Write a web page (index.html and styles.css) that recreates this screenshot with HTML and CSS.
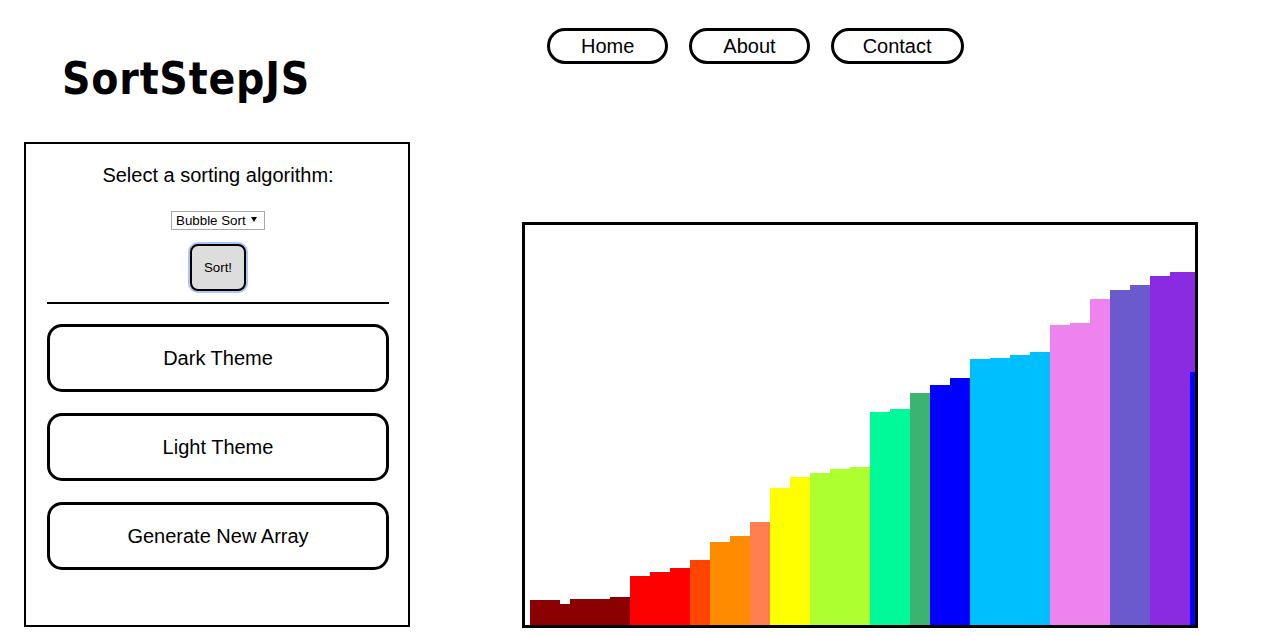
FILE: index.html
```html
<!DOCTYPE html>
<html lang="en">
<head>
<meta charset="utf-8">
<title>SortStepJS</title>
<link rel="stylesheet" href="styles.css">
</head>
<body>
<header class="header">
  <h1 class="logo">SortStepJS</h1>
  <nav class="nav">
    <a class="nav-link" href="#">Home</a>
    <a class="nav-link" href="#">About</a>
    <a class="nav-link nav-link-contact" href="#">Contact</a>
  </nav>
</header>
<main class="main">
  <aside class="panel">
    <p class="panel-label">Select a sorting algorithm:</p>
    <span class="select-wrap">
      <select class="select">
        <option>Bubble Sort</option>
        <option>Selection Sort</option>
        <option>Insertion Sort</option>
      </select>
      <span class="select-arrow"></span>
    </span>
    <button class="sort-btn">Sort!</button>
    <div class="divider"></div>
    <button class="big-btn">Dark Theme</button>
    <button class="big-btn">Light Theme</button>
    <button class="big-btn">Generate New Array</button>
  </aside>
  <section class="chart">
    <svg class="chart-svg" width="670" height="400" viewBox="0 0 670 400">
      <rect x="5" y="375" width="30" height="25" fill="#8B0000"/>
      <rect x="35" y="379" width="10" height="21" fill="#8B0000"/>
      <rect x="45" y="374" width="40" height="26" fill="#8B0000"/>
      <rect x="85" y="372" width="20" height="28" fill="#8B0000"/>
      <rect x="105" y="351" width="20" height="49" fill="#FF0000"/>
      <rect x="125" y="347" width="20" height="53" fill="#FF0000"/>
      <rect x="145" y="343" width="20" height="57" fill="#FF0000"/>
      <rect x="165" y="335" width="20" height="65" fill="#FF4500"/>
      <rect x="185" y="317" width="20" height="83" fill="#FF8C00"/>
      <rect x="205" y="311" width="20" height="89" fill="#FF8C00"/>
      <rect x="225" y="297" width="20" height="103" fill="#FF7F50"/>
      <rect x="245" y="263" width="20" height="137" fill="#FFFF00"/>
      <rect x="265" y="252" width="20" height="148" fill="#FFFF00"/>
      <rect x="285" y="248" width="20" height="152" fill="#ADFF2F"/>
      <rect x="305" y="244" width="20" height="156" fill="#ADFF2F"/>
      <rect x="325" y="242" width="20" height="158" fill="#ADFF2F"/>
      <rect x="345" y="187" width="20" height="213" fill="#00FA9A"/>
      <rect x="365" y="184" width="20" height="216" fill="#00FA9A"/>
      <rect x="385" y="168" width="20" height="232" fill="#3CB371"/>
      <rect x="405" y="160" width="20" height="240" fill="#0000FF"/>
      <rect x="425" y="153" width="20" height="247" fill="#0000FF"/>
      <rect x="445" y="134" width="20" height="266" fill="#00BFFF"/>
      <rect x="465" y="133" width="20" height="267" fill="#00BFFF"/>
      <rect x="485" y="130" width="20" height="270" fill="#00BFFF"/>
      <rect x="505" y="127" width="20" height="273" fill="#00BFFF"/>
      <rect x="525" y="100" width="20" height="300" fill="#EE82EE"/>
      <rect x="545" y="98" width="20" height="302" fill="#EE82EE"/>
      <rect x="565" y="74" width="20" height="326" fill="#EE82EE"/>
      <rect x="585" y="65" width="20" height="335" fill="#6A5ACD"/>
      <rect x="605" y="60" width="20" height="340" fill="#6A5ACD"/>
      <rect x="625" y="51" width="20" height="349" fill="#8A2BE2"/>
      <rect x="645" y="47" width="25" height="353" fill="#8A2BE2"/>
      <rect x="665" y="147" width="5" height="253" fill="#0000FF"/>
    </svg>
  </section>
</main>
</body>
</html>
```
FILE: styles.css
```css
* { box-sizing: border-box; }

html, body {
  margin: 0;
  padding: 0;
  background: #fff;
}

body {
  font-family: "Liberation Sans", Arial, sans-serif;
  color: #000;
  width: 1272px;
  height: 636px;
  overflow: hidden;
}

.header {
  display: grid;
  grid-template-columns: 547px auto;
  align-items: start;
}

.logo {
  margin: 55px 0 0 62px;
  font-family: "DejaVu Sans Condensed", "DejaVu Sans", sans-serif;
  font-stretch: condensed;
  font-weight: 700;
  font-size: 44px;
  letter-spacing: 0.8px;
  line-height: 48px;
  height: 48px;
}

.nav {
  display: flex;
  gap: 21px;
  margin-top: 28px;
}

.nav-link {
  display: block;
  height: 36px;
  padding: 0 31px;
  border: 3px solid #000;
  border-radius: 18px;
  font-size: 20px;
  line-height: 30px;
  color: #000;
  text-decoration: none;
}

.nav-link-contact {
  padding: 0 29px;
}

.main {
  display: flex;
  align-items: flex-start;
  margin-top: 39px;
}

.panel {
  margin-left: 24px;
  width: 386px;
  height: 485px;
  border: 2px solid #000;
  padding: 0 19px 0 21px;
  display: flex;
  flex-direction: column;
  align-items: center;
}

.panel-label {
  margin: 20px 0 0;
  font-size: 20px;
  line-height: 23px;
}

.select-wrap {
  position: relative;
  display: block;
  margin-top: 24px;
  width: 94px;
  height: 19px;
}

.select {
  appearance: none;
  -webkit-appearance: none;
  display: block;
  width: 94px;
  height: 19px;
  margin: 0;
  padding: 0 0 0 4px;
  border: 1px solid #a9a9a9;
  border-radius: 0;
  background: #fff;
  font-family: "Liberation Sans", Arial, sans-serif;
  font-size: 13.33px;
  line-height: 17px;
  color: #000;
}

.select-arrow {
  position: absolute;
  right: 8px;
  top: 6px;
  width: 0;
  height: 0;
  border-left: 3px solid transparent;
  border-right: 3px solid transparent;
  border-top: 5px solid #000;
  pointer-events: none;
}

.sort-btn {
  margin-top: 14px;
  width: 56px;
  height: 47px;
  border: 2px solid #000;
  border-radius: 8px;
  background: #dddddd;
  box-shadow: 0 0 0 2px #a9c6f6;
  font-family: "Liberation Sans", Arial, sans-serif;
  font-size: 13.33px;
  color: #000;
  padding: 0;
}

.divider {
  margin-top: 11px;
  width: 100%;
  height: 2px;
  background: #000;
}

.big-btn {
  margin-top: 20px;
  width: 100%;
  height: 68px;
  border: 3px solid #000;
  border-radius: 15px;
  background: #fff;
  font-family: "Liberation Sans", Arial, sans-serif;
  font-size: 20px;
  color: #000;
  padding: 0;
}

.big-btn + .big-btn {
  margin-top: 21px;
}

.chart {
  margin-left: 112px;
  margin-top: 80px;
  width: 676px;
  height: 406px;
  border: 3px solid #000;
  background: #fff;
}

.chart-svg {
  display: block;
}
```
